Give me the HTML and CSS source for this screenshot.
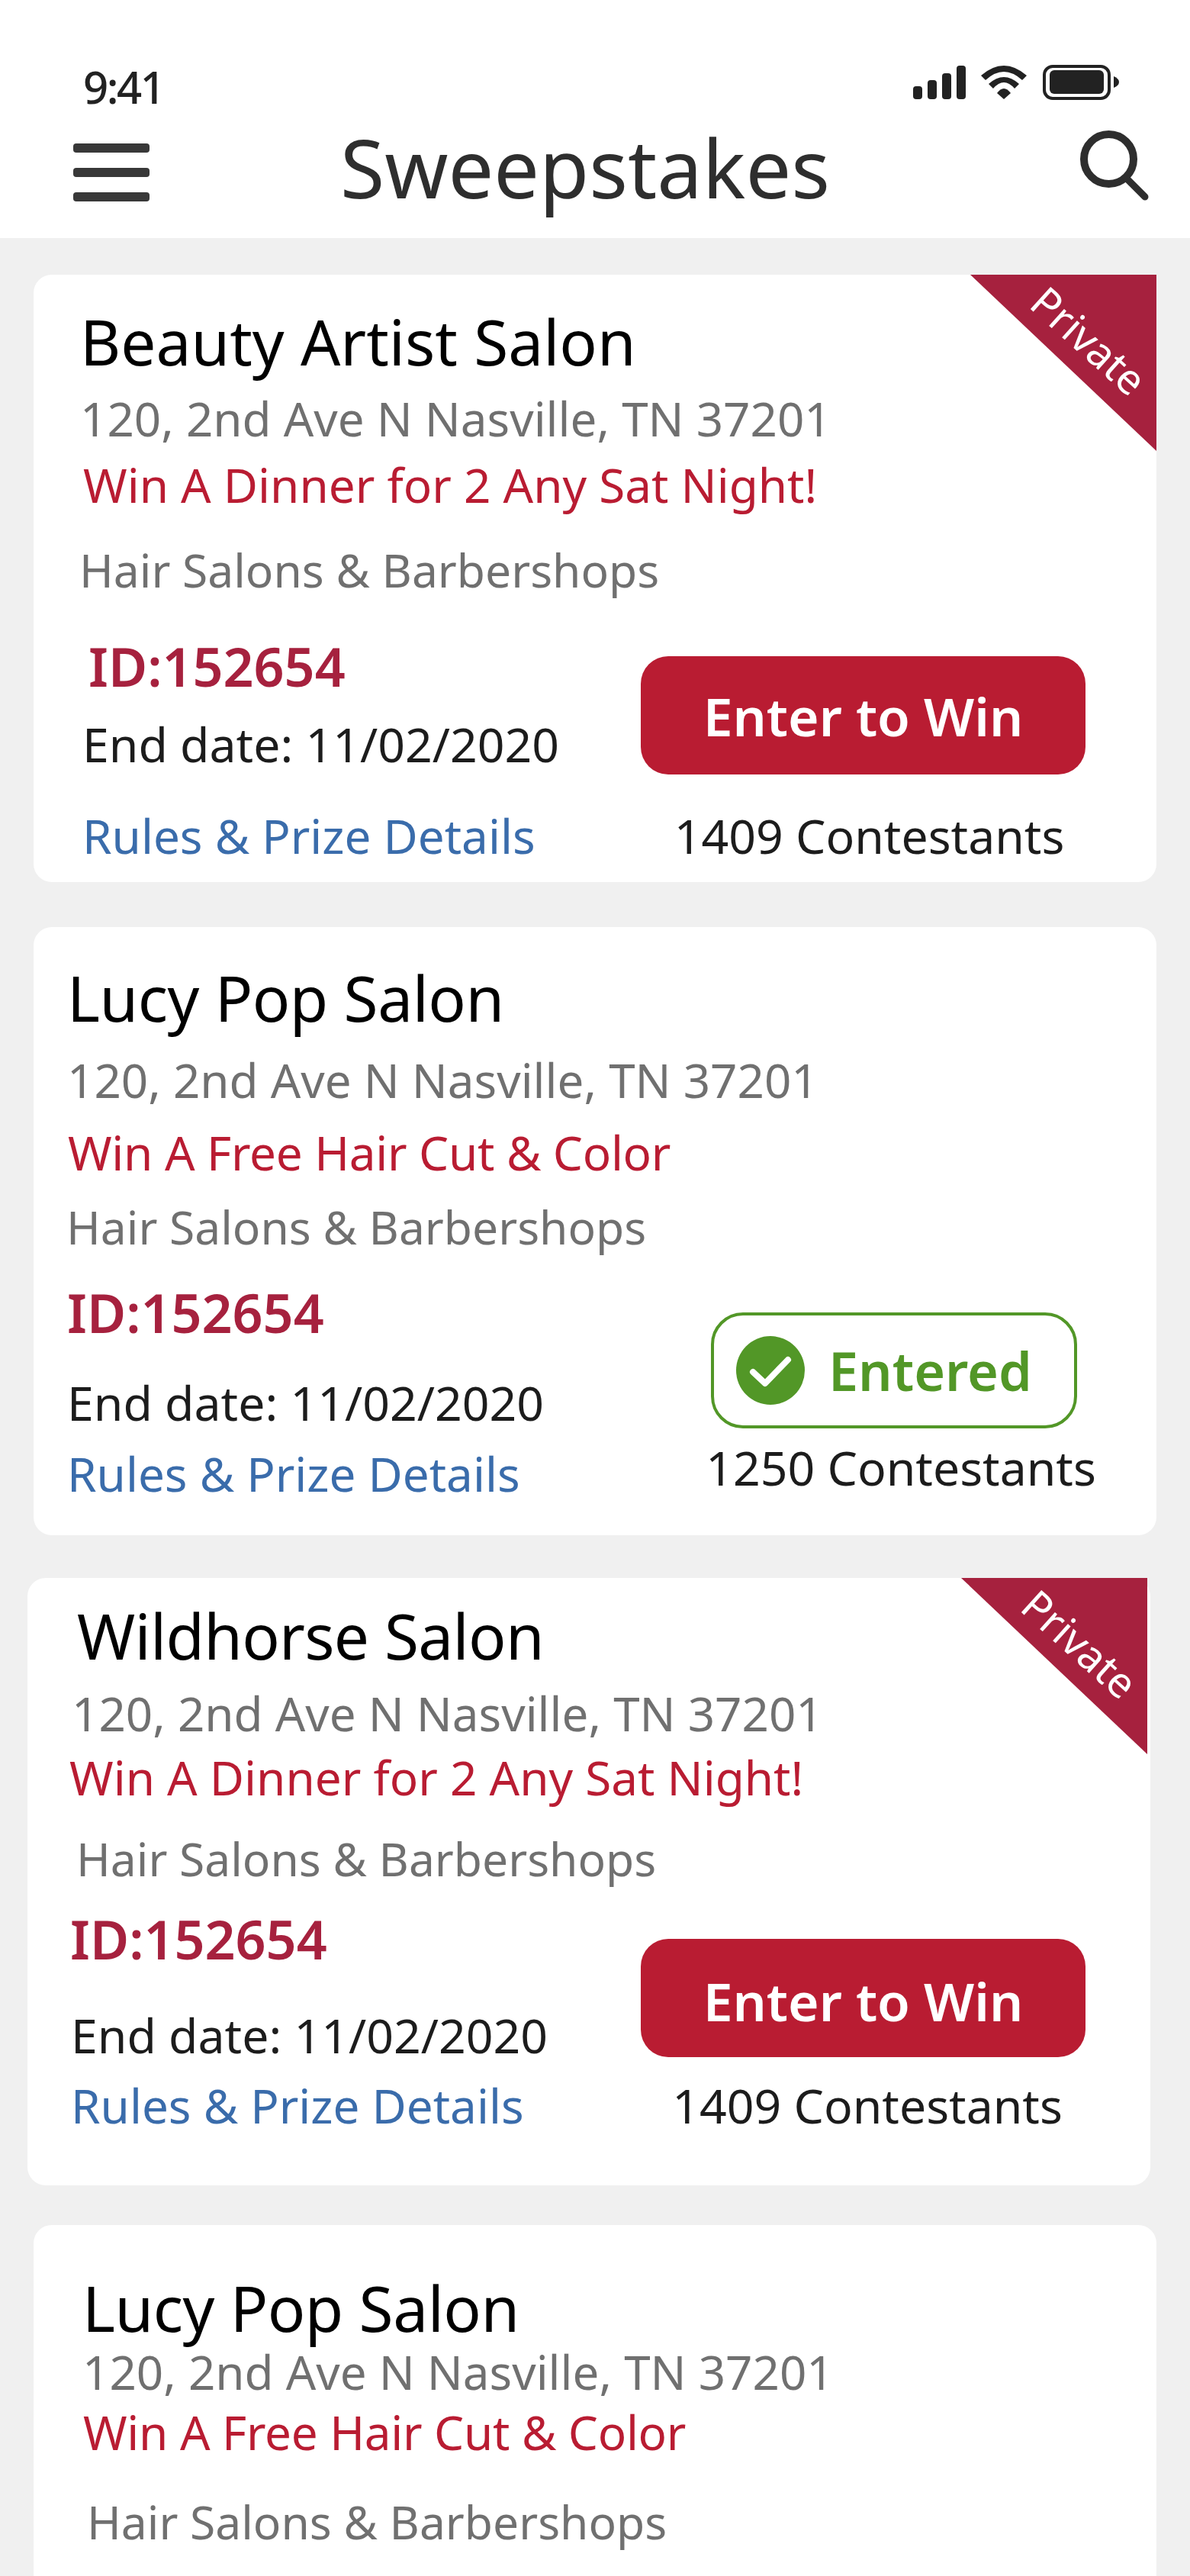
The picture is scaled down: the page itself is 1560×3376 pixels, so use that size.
FILE: index.html
```html
<html>
<head>
<title>Sweepstakes</title>
<link rel="stylesheet" href="styles.css">
</head>
<body>

<div class="top">
    <div class="status">
        <span class="time">9:41</span>
        <svg class="status-icons" width="270" height="46" viewBox="0 0 270 46">
            <rect x="0" y="28" width="12" height="17" rx="4" fill="#222"/>
            <rect x="19" y="20" width="12" height="25" rx="4" fill="#222"/>
            <rect x="38" y="11" width="12" height="34" rx="4" fill="#222"/>
            <rect x="57" y="1" width="12" height="44" rx="4" fill="#222"/>
            <path d="M89 14 Q119 -12 149 14 L143 20 Q119 -2 95 20 Z" fill="#222"/>
            <path d="M99 25 Q119 7 139 25 L133 31 Q119 15 105 31 Z" fill="#222"/>
            <path d="M110 37 Q119 25 128 37 L119 45 Z" fill="#222"/>
            <rect x="172" y="2" width="85" height="42" rx="11" fill="none" stroke="#222" stroke-width="4"/>
            <rect x="179" y="7" width="71" height="31" rx="6" fill="#222"/>
            <path d="M263 15 Q270 18 270 22.5 Q270 27 263 30 Z" fill="#222"/>
        </svg>
    </div>
    <div class="bar">
        <div class="burger"><i></i><i></i><i></i></div>
        <h1>Sweepstakes</h1>
        <svg class="search" width="90" height="92" viewBox="0 0 90 92">
            <circle cx="37.5" cy="37.5" r="32.5" fill="none" stroke="#2e2e2e" stroke-width="10"/>
            <path d="M60 62 L85 87" fill="none" stroke="#2e2e2e" stroke-width="9" stroke-linecap="round"/>
        </svg>
    </div>
</div>

<div class="list">

    <div class="card card-one">
        <div class="ribbon"><span>Private</span></div>
        <h2>Beauty Artist Salon</h2>
        <div class="address">120, 2nd Ave N Nasville, TN 37201</div>
        <div class="prize">Win A Dinner for 2 Any Sat Night!</div>
        <div class="category">Hair Salons &amp; Barbershops</div>
        <div class="bottom">
            <div class="info">
                <div class="id">ID:152654</div>
                <div class="end">End date: 11/02/2020</div>
                <a class="rules">Rules &amp; Prize Details</a>
            </div>
            <div class="action">
                <button>Enter to Win</button>
                <div class="count">1409 Contestants</div>
            </div>
        </div>
    </div>

    <div class="card card-two">
        <h2>Lucy Pop Salon</h2>
        <div class="address">120, 2nd Ave N Nasville, TN 37201</div>
        <div class="prize">Win A Free Hair Cut &amp; Color</div>
        <div class="category">Hair Salons &amp; Barbershops</div>
        <div class="bottom">
            <div class="info">
                <div class="id">ID:152654</div>
                <div class="end">End date: 11/02/2020</div>
                <a class="rules">Rules &amp; Prize Details</a>
            </div>
            <div class="action">
                <div class="entered">
                    <svg width="90" height="90" viewBox="0 0 90 90">
                        <circle cx="45" cy="45" r="45" fill="#529727"/>
                        <path d="M22 47 L38 62 L68 31" fill="none" stroke="#fff" stroke-width="8" stroke-linecap="round" stroke-linejoin="round"/>
                    </svg>
                    <span>Entered</span>
                </div>
                <div class="count">1250 Contestants</div>
            </div>
        </div>
    </div>

    <div class="card card-three">
        <div class="ribbon"><span>Private</span></div>
        <h2>Wildhorse Salon</h2>
        <div class="address">120, 2nd Ave N Nasville, TN 37201</div>
        <div class="prize">Win A Dinner for 2 Any Sat Night!</div>
        <div class="category">Hair Salons &amp; Barbershops</div>
        <div class="bottom">
            <div class="info">
                <div class="id">ID:152654</div>
                <div class="end">End date: 11/02/2020</div>
                <a class="rules">Rules &amp; Prize Details</a>
            </div>
            <div class="action">
                <button>Enter to Win</button>
                <div class="count">1409 Contestants</div>
            </div>
        </div>
    </div>

    <div class="card card-four">
        <h2>Lucy Pop Salon</h2>
        <div class="address">120, 2nd Ave N Nasville, TN 37201</div>
        <div class="prize">Win A Free Hair Cut &amp; Color</div>
        <div class="category">Hair Salons &amp; Barbershops</div>
    </div>

</div>

</body>
</html>
```
FILE: styles.css
```css
html, body { margin: 0; height: 3376px; overflow: hidden; }
body { font-family: "Noto Sans", sans-serif; background: #f0f0f0; color: #000; }

.top { background: #fff; height: 312px; box-sizing: border-box; padding-top: 78px; }
.status { display: flex; justify-content: space-between; align-items: flex-start; padding: 0 93px 0 109px; height: 82px; }
.time { font-size: 58px; font-weight: 500; letter-spacing: -2.5px; line-height: 72px; color: #222; }
.status-icons { margin-top: 7px; }
.bar { display: flex; align-items: flex-start; padding: 0 54px 0 96px; }
.burger { display: flex; flex-direction: column; gap: 20px; width: 100px; margin-top: 28px; }
.burger i { display: block; height: 12px; background: #383838; border-radius: 4px; }
h1 { font-size: 106px; font-weight: 400; margin: 1px 0 0 250px; color: #2e2e2e; line-height: 116px; }
.search { margin: 11px 0 0 auto; }

.list { display: flex; flex-direction: column; }
.card { background: #fff; border-radius: 24px; position: relative; box-sizing: border-box; margin: 0 44px; }

h2 { font-size: 82px; font-weight: 400; margin: 0; line-height: 96px; }
.address { font-size: 61.9px; color: #707070; line-height: 80px; }
.prize { font-size: 62px; color: #b91c32; line-height: 80px; }
.category { font-size: 60.5px; color: #707070; line-height: 80px; }

.bottom { display: flex; justify-content: space-between; }
.id { font-size: 70px; font-weight: 600; color: #a6213e; line-height: 90px; }
.end { font-size: 62.5px; color: #1c1c1c; line-height: 80px; }
.rules { display: block; font-size: 62px; color: #3a6cab; line-height: 80px; }
.action { text-align: center; }
button { display: block; width: 583px; height: 155px; background: #b91c32; color: #fff; border: none; border-radius: 36px; font-family: inherit; font-size: 69.5px; font-weight: 600; padding: 0; }
.count { font-size: 62.5px; color: #1c1c1c; line-height: 80px; }

.entered { display: flex; align-items: center; width: 480px; height: 152px; box-sizing: border-box; border: 4px solid #529727; border-radius: 42px; padding-left: 29px; }
.entered span { font-size: 70px; font-weight: 600; color: #529727; margin-left: 31px; }

.ribbon { position: absolute; top: 0; right: 0; width: 244px; height: 231px; background: #a6213e; clip-path: polygon(0 0, 100% 0, 100% 100%); }
.ribbon span { position: absolute; top: 56px; left: 61px; width: 190px; line-height: 60px; text-align: center; font-size: 55px; color: #fff; transform: rotate(42deg); }

/* first card */
.card-one { height: 796px; margin-top: 48px; padding: 39px 93px 0 61px; border-top-right-radius: 0; }
.card-one .address { margin-top: 13px; }
.card-one .prize { margin: 7px 0 0 4px; }
.card-one .category { margin: 32px 0 0 -1px; }
.card-one .id { margin: 41px 0 0 11px; }
.card-one .end { margin: 17px 0 0 3px; }
.card-one .rules { margin: 40px 0 0 3px; }
.card-one button { margin-top: 73px; }
.card-one .count { margin-top: 40px; padding-left: 16px; }

/* second card */
.card-two { height: 797px; margin-top: 59px; padding: 44px 35px 0 44px; }
.card-two h2 { letter-spacing: -0.5px; }
.card-two .address { margin-top: 20px; }
.card-two .prize { margin: 15px 0 0 1px; letter-spacing: -0.3px; }
.card-two .category { margin: 18px 0 0 -1px; }
.card-two .id { margin: 27px 0 0 0; }
.card-two .end { margin: 33px 0 0 0; }
.card-two .rules { margin: 13px 0 0 0; }
.card-two .action { width: 600px; }
.card-two .entered { margin: 72px 0 0 51px; }
.card-two .count { margin-top: 11px; }

/* third card sits a little to the left */
.card-three { height: 796px; margin: 56px 52px 0 36px; padding: 27px 85px 0 58px; }
.card-three .ribbon { right: 4px; }
.card-three h2 { margin-left: 7px; letter-spacing: -0.7px; }
.card-three .address { margin-top: 14px; }
.card-three .prize { margin: 4px 0 0 -3px; }
.card-three .category { margin: 27px 0 0 6px; }
.card-three .id { margin: 20px 0 0 -2px; }
.card-three .end { margin: 41px 0 0 -1px; }
.card-three .rules { margin: 12px 0 0 -1px; }
.card-three button { margin-top: 65px; padding-top: 6px; }
.card-three .count { margin-top: 23px; padding-left: 11px; }

/* last card runs off the page */
.card-four { height: 600px; margin-top: 52px; padding: 68px 60px 0 64px; }
.card-four h2 { line-height: 80px; letter-spacing: -0.5px; }
.card-four .address { margin-top: 4px; }
.card-four .prize { margin: -1px 0 0 1px; letter-spacing: -0.3px; }
.card-four .category { margin: 38px 0 0 6px; }
```
